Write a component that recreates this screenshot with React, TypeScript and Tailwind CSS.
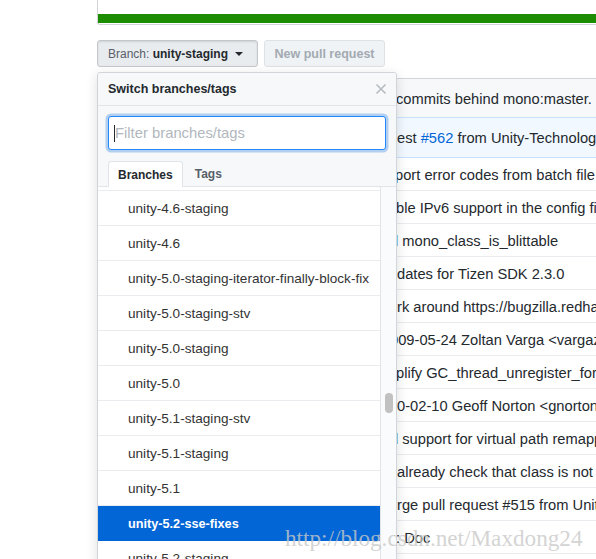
import React from 'react';

const branches = [
  'unity-4.6-staging',
  'unity-4.6',
  'unity-5.0-staging-iterator-finally-block-fix',
  'unity-5.0-staging-stv',
  'unity-5.0-staging',
  'unity-5.0',
  'unity-5.1-staging-stv',
  'unity-5.1-staging',
  'unity-5.1',
  'unity-5.2-sse-fixes',
  'unity-5.2-staging',
];

// commit messages of the file table, only the right part shows past the menu
const commits: { text: string; shift?: string }[] = [
  { text: 'port error codes from batch file', shift: '-ml-[1px]' },
  { text: 'ble IPv6 support in the config file' },
  { text: 'd mono_class_is_blittable', shift: '-ml-[6px]' },
  { text: 'dates for Tizen SDK 2.3.0', shift: 'ml-[1px]' },
  { text: 'rk around https://bugzilla.redhat.com', shift: 'ml-[1px]' },
  { text: '009-05-24 Zoltan Varga <vargaz@gmail.com>', shift: '-ml-[6px]' },
  { text: 'plify GC_thread_unregister_for_thread' },
  { text: '0-02-10 Geoff Norton <gnorton@novell.com>', shift: 'ml-[1px]' },
  { text: 'd support for virtual path remapping', shift: '-ml-[6px]' },
  { text: 'already check that class is not null', shift: 'ml-[1px]' },
  { text: 'rge pull request #515 from Unity-Technologies', shift: 'ml-[1px]' },
  { text: ': Doc' },
  { text: '' },
];

const Caret = () => (
  <svg width="8" height="4" viewBox="0 0 8 4" className="ml-[7px]">
    <path d="M0 0h8L4 4z" fill="#24292e" />
  </svg>
);

export default function App() {
  return (
    <div
      className="relative w-[596px] h-[559px] overflow-hidden bg-white text-[#24292e]"
      style={{ fontFamily: '"Liberation Sans", Arial, sans-serif' }}
    >
      <div className="pl-[97px]">
        {/* bottom of the repo summary box with the language bar */}
        <div className="h-[25px] border-l border-b border-[#d1d5da] rounded-bl-[3px] flex flex-col justify-end">
          <div className="h-[9px] mb-px bg-[#1c8c00]" />
        </div>

        {/* buttons */}
        <div className="mt-[15px] flex gap-[6px]">
          <button className="w-[161px] h-[27px] flex items-center pl-[10px] pt-px text-[12px] font-bold border border-[#c3c7cb] rounded-[3px] bg-[#e9ecef] shadow-[inset_0_1px_2px_rgba(27,31,35,0.12)]">
            <span className="text-[#586069] font-normal">Branch:&nbsp;</span>
            <span>unity-staging</span>
            <Caret />
          </button>
          <button className="w-[121px] h-[27px] flex items-center justify-center pt-[2px] text-[12.5px] font-bold text-[#a3aab1] border border-[#dfe2e5] rounded-[3px] bg-[#eff3f6]">
            New pull request
          </button>
        </div>

        {/* file table behind the menu */}
        <div className="mt-[11px] text-[14.7px]">
          <div className="h-[39px] flex items-center pt-[2px] bg-[#f6f8fa] border-t border-[#d1d5da]">
            <div className="w-[299px] shrink-0" />
            <span className="whitespace-nowrap">commits behind mono:master.</span>
          </div>
          <div className="h-[41px] flex items-center pt-[2px] bg-[#f1f8ff] border-y border-[#c8e1ff]">
            <div className="w-[300px] shrink-0" />
            <span className="whitespace-nowrap">
              est <span className="text-[#0366d6]">#562</span> from Unity-Technologies/unity-staging
            </span>
          </div>
          {commits.map((c, i) => (
            <div key={i} className="h-[33px] flex items-center pt-[3px] border-b border-[#eaecef]">
              <div className="w-[299px] shrink-0" />
              <span className={`whitespace-nowrap ${c.shift ?? ''}`}>{c.text}</span>
            </div>
          ))}
        </div>
      </div>

      {/* branch switcher menu */}
      <div className="absolute left-[97px] top-[72px] w-[300px] h-[500px] border border-[#d1d5da] rounded-t-[3px] bg-white shadow-[0_3px_12px_rgba(27,31,35,0.15)] flex flex-col z-10">
        <div className="h-[33px] shrink-0 flex items-center justify-between pl-[10px] pr-[9px] bg-[#f6f8fa] border-b border-[#e1e4e8] rounded-t-[3px]">
          <span className="text-[12.5px] font-bold">Switch branches/tags</span>
          <svg width="12" height="12" viewBox="0 0 12 12">
            <path d="M1.5 1.5l9 9M10.5 1.5l-9 9" stroke="#b7bcc1" strokeWidth="1.6" />
          </svg>
        </div>

        <div className="bg-[#f6f8fa] pt-[10px] px-[10px] border-b border-[#e1e4e8] shrink-0">
          <div className="h-[34px] flex items-center pl-[5px] bg-white border border-[#2188ff] rounded-[3px] shadow-[0_0_0_2.5px_rgba(3,102,214,0.28)]">
            <span className="w-px h-[17px] bg-[#24292e]" />
            <span className="text-[14.8px] text-[#b1b7bd]">Filter branches/tags</span>
          </div>
          <div className="mt-[11px] flex text-[12px] font-bold">
            <div className="h-[26px] -mb-px px-[9px] pt-px flex items-center bg-white border border-b-0 border-[#e1e4e8] rounded-t-[3px]">
              Branches
            </div>
            <div className="h-[25px] pl-[12px] pt-px flex items-center text-[#586069]">Tags</div>
          </div>
        </div>

        <div className="flex flex-1 min-h-0">
          <div className="w-[283px] border-r border-[#e1e4e8] overflow-hidden">
            <div className="h-[4px] border-b border-[#eaecef]" />
            {branches.map((b, i) => (
              <div
                key={b}
                className={
                  i === 9
                    ? 'h-[35px] flex items-center pl-[30px] pt-[3px] text-[12.7px] font-bold text-white bg-[#0366d6] border-b border-[#0366d6]'
                    : 'h-[35px] flex items-center pl-[30px] pt-[3px] text-[13.6px] text-[#333] border-b border-[#eaecef]'
                }
              >
                {b}
              </div>
            ))}
          </div>
          <div className="flex-1 bg-[#fafbfc] pt-[206px] flex justify-center">
            <div className="w-[8px] h-[20px] rounded-full bg-[#c1c1c1]" />
          </div>
        </div>
      </div>

      {/* blog watermark */}
      <div
        className="absolute left-[285px] top-[521px] text-[23.2px] text-[rgba(200,200,200,0.8)] whitespace-nowrap z-20"
        style={{ fontFamily: '"Liberation Serif", "Times New Roman", serif' }}
      >
        http://blog.csdn.net/Maxdong24
      </div>
    </div>
  );
}
